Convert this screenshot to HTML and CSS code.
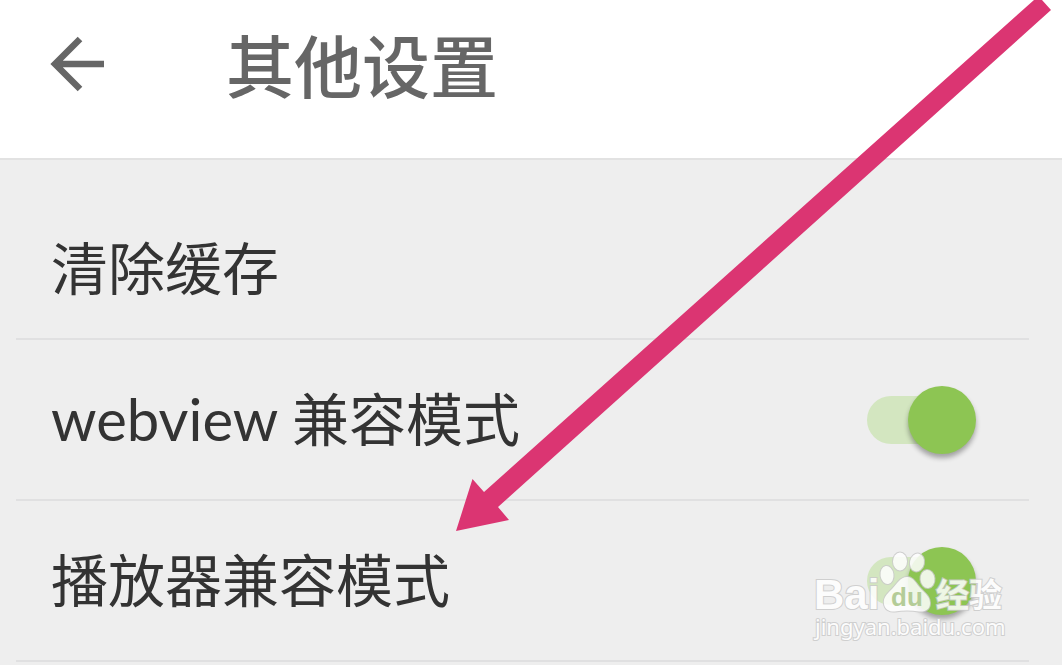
FILE: index.html
```html
<!DOCTYPE html>
<html lang="zh-CN">
<head>
<meta charset="utf-8">
<meta name="viewport" content="width=device-width, initial-scale=1">
<title>其他设置</title>
<link rel="stylesheet" href="styles.css">
</head>
<body>
<header class="app-bar">
  <button class="back" type="button" aria-label="返回">
    <svg viewBox="0 0 56 56" aria-hidden="true"><path d="M30 3 5 28l25 25M5 28h49" fill="none" stroke="currentColor" stroke-width="6.500"/></svg>
  </button>
  <h1 class="title">其他设置</h1>
</header>
<main class="settings">
  <button class="row row-first" type="button"><span class="label">清除缓存</span></button>
  <div class="row">
    <label class="label" for="webview"><span class="latin">webview </span>兼容模式</label>
    <input class="switch" id="webview" type="checkbox" role="switch" checked>
  </div>
  <div class="row">
    <label class="label" for="player">播放器兼容模式</label>
    <input class="switch" id="player" type="checkbox" role="switch" checked>
  </div>
</main>
<svg class="pointer" width="1062" height="665" viewBox="0 0 1062 665" aria-hidden="true">
  <path d="M456 531 472.500 479 484 492 1034 0H1042L1051 10 498 507 509 520Z" fill="#db3572"/>
</svg>
<svg class="watermark" width="200" height="100" viewBox="810 545 200 100" role="img" aria-label="Baidu 经验">
  <g class="mark">
    <ellipse cx="887" cy="575" rx="6.500" ry="9" transform="rotate(-8 887 575)"/>
    <ellipse cx="900" cy="561.500" rx="7" ry="9"/>
    <ellipse cx="917" cy="562.500" rx="7" ry="9" transform="rotate(12 917 562.500)"/>
    <ellipse cx="927.500" cy="579" rx="7" ry="9" transform="rotate(-5 927.500 579)"/>
    <path d="M907 577C900 577 897 584 892 589C886 595 883 598 884 604C885 610 890 612 895 611.500C903 610 911 610 919 611.500C926 612 930 609 930 603C930 597 926 594 921 589C916 584 914 577 907 577Z"/>
    <text class="brand" x="814" y="609" font-size="42">Bai</text>
    <text class="brand" x="936" y="607" font-size="33">经验</text>
    <text class="site" x="815" y="635" font-size="22">jingyan.baidu.com</text>
  </g>
  <text class="du" x="891" y="606" font-size="26">du</text>
</svg>
</body>
</html>
```
FILE: styles.css
```css
* { box-sizing: border-box; }

body {
  margin: 0;
  min-height: 100vh;
  position: relative;
  overflow-x: hidden;
  background: #eeeeee;
  color: #333333;
  font-family: "Noto Sans CJK SC", sans-serif;
}

button {
  border: 0;
  padding: 0;
  background: none;
  color: inherit;
  font: inherit;
  text-align: left;
}

.app-bar {
  display: flex;
  align-items: center;
  gap: 120px;
  height: 160px;
  padding: 0 50px 30px;
  background: #ffffff;
  border-bottom: 2px solid #e2e2e2;
}

.back {
  display: flex;
  width: 56px;
  height: 56px;
  color: #666666;
}

.back svg { width: 100%; }

.title {
  margin: 0;
  color: #666666;
  font-size: 68px;
  font-weight: 500;
  line-height: 80px;
}

.settings { padding: 40px 33px 0 16px; }

.row {
  display: flex;
  align-items: center;
  justify-content: space-between;
  width: 100%;
  height: 161px;
  padding: 0 53px 0 35px;
  border-bottom: 2px solid #e0e0e1;
}

.row-first { height: 140px; }

.label {
  padding-bottom: 8px;
  font-size: 57px;
  line-height: 80px;
}

.latin {
  font-family: Lato, sans-serif;
  font-size: 58px;
  line-height: 1;
}

.switch {
  appearance: none;
  position: relative;
  width: 109px;
  height: 68px;
  margin: 0;
}

.switch::before {
  content: "";
  position: absolute;
  inset: 10px 8px 10px 0;
  border-radius: 24px;
  background: #d3e6c0;
}

.switch::after {
  content: "";
  position: absolute;
  top: 0;
  right: 0;
  width: 68px;
  height: 68px;
  border-radius: 50%;
  background: #8dc553;
  box-shadow: 0 4px 5px rgba(0, 0, 0, 0.32);
}

.pointer {
  position: absolute;
  top: 0;
  left: 0;
  pointer-events: none;
}

.watermark {
  position: absolute;
  top: 545px;
  right: 52px;
  pointer-events: none;
}

.mark {
  fill: #ffffff;
  stroke: #cacaca;
  stroke-width: 2px;
  paint-order: stroke;
  opacity: 0.85;
}

.brand {
  font-family: "Liberation Sans", "Noto Sans CJK SC", sans-serif;
  font-weight: 700;
}

.site {
  font-family: "Noto Sans", sans-serif;
}

.du {
  fill: #b4cc98;
  font-family: "Liberation Sans", sans-serif;
  font-weight: 700;
}
```
